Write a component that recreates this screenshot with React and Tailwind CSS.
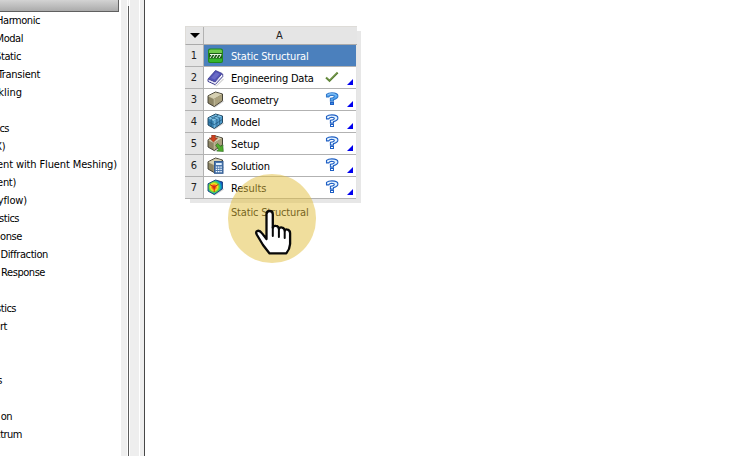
import React from "react";

const FONT = "font-['DejaVu_Sans_Condensed','DejaVu_Sans',sans-serif] [font-stretch:75%]";

const tree = [
  ["Harmonic", "w-[40px]", "tracking-[-0.45px]"],
  ["Modal", "w-[23px]", "tracking-[-0.45px]"],
  ["Static", "w-[21px]", "tracking-[-0.4px]"],
  ["Transient", "w-[40px]", "tracking-[-0.3px]"],
  ["kling", "w-[22px]", "tracking-[0px]"],
  ["", "w-0"],
  ["cs", "w-[9px]"],
  ["X)", "w-[5px]"],
  ["ent with Fluent Meshing)", "w-[117px]", "tracking-[-0.12px]"],
  ["ent)", "w-[16px]", "tracking-[-0.3px]"],
  ["yflow)", "w-[27px]", "tracking-[-0.15px]"],
  ["stics", "w-[19px]", "tracking-[-0.5px]"],
  ["onse", "w-[22px]", "tracking-[-0.4px]"],
  ["Diffraction", "w-[48px]", "tracking-[-0.4px]"],
  ["Response", "w-[45px]", "tracking-[-0.45px]"],
  ["", "w-0"],
  ["stics", "w-[16px]"],
  ["rt", "w-[7px]"],
  ["", "w-0"],
  ["", "w-0"],
  ["s", "w-[2px]"],
  ["", "w-0"],
  ["on", "w-[12px]"],
  ["ctrum", "w-[22px]"],
];

function Box({ blue }) {
  return (
    <g>
      <path d="M2 13l6 3.5 9-6-1-1z" fill="#777" opacity=".35" />
      <path d="M1 4.8L8.5 1 15.5 3v6.7L7.2 15.5 1 12z" fill={blue ? "#3580b0" : "#8d8565"} stroke={blue ? "#173b54" : "#39362a"} strokeWidth=".9" strokeLinejoin="round" />
      <path d="M1.5 5L8.5 1.5l6.5 1.7-7.8 4.6z" fill={blue ? "#84c8ea" : "#d6d0b2"} />
      <path d="M7.2 7.8L15 3.4v6L7.2 15z" fill={blue ? "#559fce" : "#aaa17e"} />
      <path d="M1.6 5.2l5.6 2.7V15" fill="none" stroke={blue ? "#a5d9ef" : "#dfdabd"} strokeWidth=".6" />
      {blue && (
        <path
          d="M4.2 6.3v7M1.4 8.7L7.2 11.7 15 6.7M9.9 6.3v7M12.6 4.8v6.6M3.8 4L9.8 6.3M6.2 2.7l6.3 2M4.2 6.4l7-4.2"
          fill="none"
          stroke="#1c557b"
          strokeWidth=".7"
        />
      )}
    </g>
  );
}

function CellIcon({ kind }) {
  return (
    <svg className="block h-[18px] w-[18px] shrink-0" viewBox="0 0 18 18">
      {kind === "static" && (
        <g>
          <rect x="1" y="1.5" width="15" height="14.5" rx="2" fill="#1f8a1a" />
          <path d="M2 4q0-1.5 1.5-1.5h10Q15 2.5 15 4v3H2z" fill="#6fca4c" />
          <path d="M2 11h13v2.5q0 1.5-1.5 1.5h-10Q2 15 2 13.5z" fill="#35b52c" />
          <rect x="2" y="6" width="13" height="5.5" fill="#1c5c18" />
          <path d="M3 7.5h11.5M3 11l2-3M6 11l2-3M9 11l2-3M12 11l2-3" stroke="#eaf5e6" strokeWidth="1" />
        </g>
      )}
      {kind === "book" && (
        <g>
          <path d="M3 14l6 2.5 7-7 1 1-7.5 7z" fill="#999" opacity=".4" />
          <path d="M1 10L8.5 1.5l6.7 3L8 13z" fill="#5152b5" stroke="#38378b" strokeWidth=".8" strokeLinejoin="round" />
          <path d="M4 9L9 3.3l3.7 1.7-4.8 5.6z" fill="#6a6bc6" />
          <path d="M1 10.2v2.2l7.2 3.2 7.5-8V5" fill="none" stroke="#38378c" strokeWidth="1" />
          <path d="M2 11.7L8 14.2l7-7.7" fill="none" stroke="#dcddf6" strokeWidth=".9" />
        </g>
      )}
      {kind === "geometry" && <Box />}
      {kind === "model" && <Box blue />}
      {kind === "setup" && (
        <g>
          <Box />
          <path d="M4.7 0h3.5v3h2.4L6.5 7 2.3 3h2.4z" fill="#cf411e" stroke="#79311b" strokeWidth=".6" />
          <path d="M8.7 10.3l1.9-1.9 3.3 3.2 1.9-1.8.5 6.7-6.6-.4 1.9-1.9z" fill="#50ad2d" stroke="#28651b" strokeWidth=".6" />
        </g>
      )}
      {kind === "solution" && (
        <g>
          <Box />
          <rect x="7.5" y="4.5" width="8.5" height="11.8" fill="#4c78ae" stroke="#345c91" />
          <rect x="9" y="6" width="5.7" height="2" fill="#e1f2ff" />
          <path d="M8.8 10.1h1.5M11 10.1h1.5M13.3 10.1h1.5M8.8 12.4h1.5M11 12.4h1.5M13.3 12.4h1.5M8.8 14.7h1.5M11 14.7h1.5M13.3 14.7h1.5" stroke="#f4faff" strokeWidth="1.2" />
        </g>
      )}
      {kind === "results" && (
        <g>
          <defs>
            <radialGradient id="contour" gradientUnits="userSpaceOnUse" cx="7" cy="8" r="9">
              <stop offset="0" stopColor="#e52314" />
              <stop offset=".18" stopColor="#f05a15" />
              <stop offset=".38" stopColor="#ffe01e" />
              <stop offset=".55" stopColor="#70d531" />
              <stop offset=".72" stopColor="#13b4b5" />
              <stop offset=".95" stopColor="#144bc2" />
            </radialGradient>
          </defs>
          <path d="M2 13l6 3.5 9-6-1-1z" fill="#777" opacity=".35" />
          <path d="M1 4.8L8.5 1 15.5 3v6.7L7.2 15.5 1 12z" fill="url(#contour)" stroke="#1b3f75" strokeWidth=".9" strokeLinejoin="round" />
          <path d="M3 5.6l4.2 2.4 4.3-2.7M7.2 8v5" fill="none" stroke="#d32414" strokeWidth="1" />
        </g>
      )}
    </svg>
  );
}

function Status({ kind }) {
  if (kind === "check")
    return (
      <svg className="block h-[14px] w-[14px]" viewBox="0 0 14 14">
        <path d="M1 6.5l3.5 3.3L12.7 1.5" fill="none" stroke="#719448" strokeWidth="2.1" />
        <path d="M1.2 7.2l3.5 3L13 2" fill="none" stroke="#4f7630" strokeWidth=".7" />
      </svg>
    );
  const solid = kind === "solid";
  return (
    <svg className="mb-[2px] block h-[14px] w-[14px]" viewBox="0 0 14 14">
      <path
        d="M1.5 4.9V2.4Q3.2.9 6.9.9q6 0 6 3.2 0 2.7-4.4 3.5v1.5H5.4V6.3q3.9-.5 3.9-1.9Q9.3 3.2 6.7 3.2 4.5 3.3 3.8 4.9z"
        fill={solid ? "#57a9f2" : "#e2f2ff"}
        stroke={solid ? "#3278cb" : "#1f5fc4"}
        strokeWidth="1.1"
      />
      <rect x="5.5" y="10.5" width="3" height="2" fill={solid ? "#3b8fe5" : "#fff"} stroke="#1f5fc4" strokeWidth="1" />
      {solid && <path d="M2.5 2.8Q5 1.5 8 1.8t3.3 2" fill="none" stroke="#8ac6f8" />}
    </svg>
  );
}

const rows = [
  ["Static Structural", "static", "", "tracking-[-0.17px]"],
  ["Engineering Data", "book", "check", "tracking-[-0.22px]"],
  ["Geometry", "geometry", "solid", "tracking-[-0.22px]"],
  ["Model", "model", "hollow", "tracking-[-0.1px]"],
  ["Setup", "setup", "hollow", "tracking-[-0.1px]"],
  ["Solution", "solution", "hollow", "tracking-[-0.2px]"],
  ["Results", "results", "hollow", "tracking-[-0.05px]"],
];

export default function App() {
  return (
    <div className={`flex h-[456px] w-[754px] overflow-hidden bg-white text-[11px] text-black ${FONT}`}>
      <aside className="h-full w-[121px] shrink-0 overflow-hidden">
        <div className="h-3 w-[119px] border-b border-r border-[#606060] bg-gradient-to-b from-[#d3d3d3] to-[#ababab]" />
        {tree.map(([label, width, tracking], i) => (
          <div key={i} className="flex h-[18px] leading-[17px]">
            <div className={`flex shrink-0 justify-end whitespace-nowrap ${width} ${tracking || "tracking-[-0.5px]"}`}>{label}</div>
          </div>
        ))}
      </aside>
      <div className="flex h-full w-6 shrink-0">
        <div className="w-[6px] bg-[#efefef]" />
        <div className="w-px bg-white" />
        <div className="w-px bg-[#efefef] pt-[6px]"><div className="h-full bg-[#5c5c5c]" /></div>
        <div className="w-px bg-white" />
        <div className="w-[9px] bg-[#eeeeee]" />
        <div className="w-px bg-white" />
        <div className="w-[4px] bg-[#eeeeee]" />
        <div className="w-px bg-[#474747]" />
      </div>
      <main className="relative h-full flex-1 pl-10 pt-[26px]">
        <div className="h-[173px] w-[172px] bg-[#e5e5e5] shadow-[4px_4px_0_#e7e7e7] [clip-path:polygon(0_0,172px_0,172px_5px,176px_5px,176px_177px,5px_177px,5px_173px,0_173px)]">
          <div className="flex h-[19px] border-b border-l border-t border-[#dedcd8] border-b-[#aaa]">
            <div className="flex w-[18px] items-center justify-center border-r border-[#b2b2b2]">
              <svg className="h-[5px] w-[10px]" viewBox="0 0 10 5"><path d="M0 0h10L5 5z" /></svg>
            </div>
            <div className="flex flex-1 items-center justify-center pr-[2px] pt-[2px] text-[#222]">A</div>
          </div>
          {rows.map(([label, icon, status, tracking], i) => (
            <div key={label} className="flex h-[22px]">
              <div className="flex w-[19px] items-center justify-center border-b border-r border-[#b2b2b2] pt-[2px] text-[#222]">{i + 1}</div>
              <div className={`flex w-[152px] items-center border-b border-[#b2b2b2] pl-[3px] ${i === 0 ? "bg-[#4b80bd] text-white" : "bg-white"}`}>
                <CellIcon kind={icon} />
                <span className={`ml-[6px] w-[94px] whitespace-nowrap pt-[2px] leading-[19px] ${tracking}`}>{label}</span>
                {status && (
                  <>
                    <Status kind={status} />
                    <svg className="mb-[3px] ml-[8px] h-[6px] w-[6px] self-end" viewBox="0 0 6 6"><path d="M0 6L6 0v6z" fill="#0000f0" /></svg>
                  </>
                )}
              </div>
            </div>
          ))}
        </div>
        <div className="ml-[46px] mt-[4px] h-5 whitespace-nowrap leading-[20px] tracking-[-0.17px]">Static Structural</div>
        <div className="absolute left-[83px] top-[174px] h-[89px] w-[88px] rounded-full bg-[#e2bd3c]/50" />
        <svg className="absolute left-[108px] top-[208px] h-[50px] w-[42px]" viewBox="0 0 42 50">
          <path d="M13.5 31V6.2Q13.7 3 16.7 3q3 0 3.1 3.2v13.6q.5-2.3 3-1.9 2.8.2 3.1 3 1-2 3.3-1.3 2.3.5 2.5 3.1.9-1.9 3-1 2.4.8 2.4 3.6V36q-.3 5-3.8 9.4H16.6Q13.5 41.6 10 37L4 27q-2-3.7.7-4.2 2.2-.4 4.2 2.3z" fill="white" stroke="#080808" strokeWidth="2.3" strokeLinejoin="round" />
          <path d="M19.8 19v9M25.9 21v8M31.7 23v7" stroke="#080808" strokeWidth="2" strokeLinecap="round" />
        </svg>
      </main>
    </div>
  );
}
